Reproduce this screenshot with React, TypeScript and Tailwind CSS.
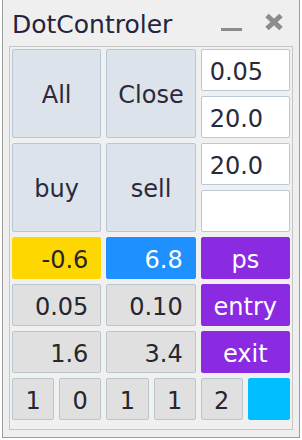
import React from "react";

const font = { fontFamily: '"DejaVu Sans", "Noto Sans", sans-serif' };

function Btn({
  children,
  className = "",
}: {
  children?: React.ReactNode;
  className?: string;
}) {
  return (
    <div
      className={`flex h-full items-center rounded-[2px] border pt-[3px] text-[24px] leading-none ${className}`}
    >
      {children}
    </div>
  );
}

export default function App() {
  const blue = "border-[#b7c7d5] bg-[#dde3eb] text-[#2a2a3c] justify-center";
  const gray = "border-[#bac6ce] bg-[#e0e0e0] text-[#26262e]";
  const input = "border-[#b9c9d7] bg-white text-[#2a2a3c] justify-start pl-[8px]";

  return (
    <div className="h-[440px] w-[302px] bg-white px-[2px] pb-[2px]" style={font}>
      <div className="flex h-full flex-col border-x border-b border-[#9c9c9c] bg-[#efefef]">
        <div className="flex h-[46px] shrink-0 items-center pl-[9px] pr-[15px]">
          <span className="flex-1 pt-[2px] text-[25px] leading-none text-[#24243c]">
            DotControler
          </span>
          <span className="mt-[12px] h-[3px] w-[21px] bg-[#8c8c8c]" />
          <svg width="20" height="18" viewBox="0 0 20 18" className="ml-[22px] mt-[-3px]">
            <path d="M3 2.5 L17 15.5 M17 2.5 L3 15.5" stroke="#8c8c8c" strokeWidth="5" strokeLinecap="butt" />
          </svg>
        </div>

        <div className="mx-[6px] mb-[7px] flex-1 border border-[#c6c6c6] bg-[#f0f0f0] p-[2px]">
          <div className="grid grid-cols-3 gap-[5px]">
            <div className="row-span-2 h-[89px]">
              <Btn className={blue}>All</Btn>
            </div>
            <div className="row-span-2 h-[89px]">
              <Btn className={blue}>Close</Btn>
            </div>
            <div className="h-[42px]">
              <Btn className={input}>0.05</Btn>
            </div>
            <div className="h-[42px]">
              <Btn className={input}>20.0</Btn>
            </div>

            <div className="row-span-2 h-[89px]">
              <Btn className={blue}>buy</Btn>
            </div>
            <div className="row-span-2 h-[89px]">
              <Btn className={blue}>sell</Btn>
            </div>
            <div className="h-[42px]">
              <Btn className={input}>20.0</Btn>
            </div>
            <div className="h-[42px]">
              <Btn className={input}></Btn>
            </div>

            <div className="h-[42px]">
              <Btn className="justify-end border-[#ffd700] bg-[#ffd700] pr-[12px] text-[#26262e]">-0.6</Btn>
            </div>
            <div className="h-[42px]">
              <Btn className="justify-end border-[#1e90ff] bg-[#1e90ff] pr-[12px] text-white">6.8</Btn>
            </div>
            <div className="h-[42px]">
              <Btn className="justify-center border-[#8a2be2] bg-[#8a2be2] text-white">ps</Btn>
            </div>

            <div className="h-[42px]">
              <Btn className={`${gray} justify-end pr-[12px]`}>0.05</Btn>
            </div>
            <div className="h-[42px]">
              <Btn className={`${gray} justify-end pr-[12px]`}>0.10</Btn>
            </div>
            <div className="h-[42px]">
              <Btn className="justify-center border-[#8a2be2] bg-[#8a2be2] text-white">entry</Btn>
            </div>

            <div className="h-[42px]">
              <Btn className={`${gray} justify-end pr-[12px]`}>1.6</Btn>
            </div>
            <div className="h-[42px]">
              <Btn className={`${gray} justify-end pr-[12px]`}>3.4</Btn>
            </div>
            <div className="h-[42px]">
              <Btn className="justify-center border-[#8a2be2] bg-[#8a2be2] text-white">exit</Btn>
            </div>
          </div>

          <div className="mt-[5px] grid h-[42px] grid-cols-6 gap-[5px]">
            {["1", "0", "1", "1", "2"].map((v, i) => (
              <Btn key={i} className={`${gray} justify-center`}>
                {v}
              </Btn>
            ))}
            <Btn className="border-[#00bfff] bg-[#00bfff]" />
          </div>
        </div>
      </div>
    </div>
  );
}
